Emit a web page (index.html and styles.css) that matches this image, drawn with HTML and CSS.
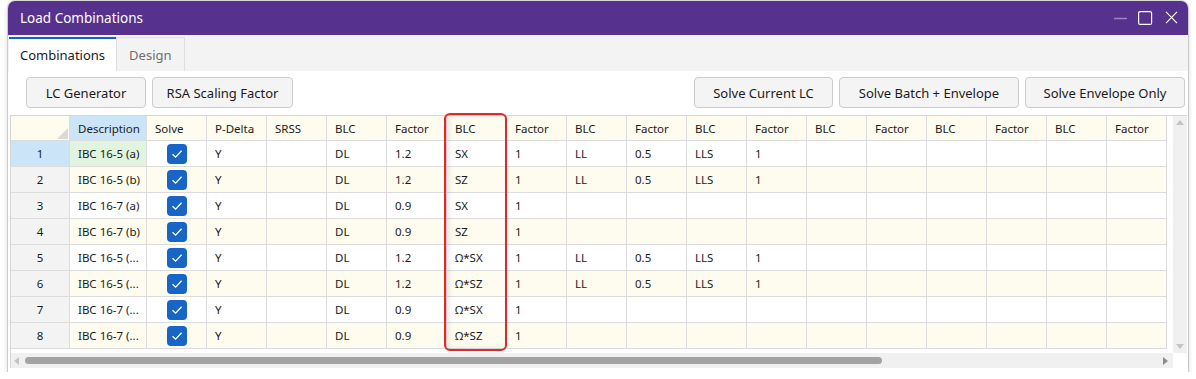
FILE: index.html
```html
<!DOCTYPE html>
<html lang="en">
<head>
  <meta charset="UTF-8" />
  <title>Load Combinations</title>
  <link rel="stylesheet" href="styles.css">
</head>
<body>

  <div class="window">
    <!-- Title bar -->
    <div class="titlebar">
      <span class="title">Load Combinations</span>
      <svg class="controls" width="64" height="14" viewBox="0 0 64 14">
        <path d="M0 7.5H13" stroke="#9c86c2" stroke-width="1.3" fill="none" />
        <rect x="24.6" y="0.6" width="13" height="12.8" rx="1.5" stroke="#fff" stroke-width="1.2" fill="none" />
        <path d="M52 0.8L63 12.2M63 0.8L52 12.2" stroke="#fff" stroke-width="1.2" fill="none" />
      </svg>
    </div>

    <!-- Tabs -->
    <div class="tabs">
      <div class="tab active">Combinations</div>
      <div class="tab">Design</div>
    </div>

    <!-- Toolbar -->
    <div class="toolbar">
      <div class="group">
        <button class="btn w-lcgen">LC Generator</button>
        <button class="btn w-rsa">RSA Scaling Factor</button>
      </div>
      <div class="group">
        <button class="btn w-current">Solve Current LC</button>
        <button class="btn w-batch">Solve Batch + Envelope</button>
        <button class="btn w-env">Solve Envelope Only</button>
      </div>
    </div>

    <!-- Grid -->
    <div class="gridbox">
      <div class="viewport">
        <div class="row head">
          <div class="cell corner-cell"><span class="tri"></span></div>
          <div class="cell selected">Description</div>
          <div class="cell">Solve</div>
          <div class="cell">P-Delta</div>
          <div class="cell">SRSS</div>
          <div class="cell">BLC</div>
          <div class="cell">Factor</div>
          <div class="cell">BLC</div>
          <div class="cell">Factor</div>
          <div class="cell">BLC</div>
          <div class="cell">Factor</div>
          <div class="cell">BLC</div>
          <div class="cell">Factor</div>
          <div class="cell">BLC</div>
          <div class="cell">Factor</div>
          <div class="cell">BLC</div>
          <div class="cell">Factor</div>
          <div class="cell">BLC</div>
          <div class="cell">Factor</div>
        </div>

        <div class="row">
          <div class="cell num selected">1</div>
          <div class="cell current">IBC 16-5 (a)</div>
          <div class="cell solve"><span class="check"><svg width="20" height="20" viewBox="0 0 20 20"><path d="M5.5 10.3L8.6 13.2L14.6 6.8" stroke="#fff" stroke-width="1.3" fill="none" /></svg></span></div>
          <div class="cell">Y</div>
          <div class="cell"></div>
          <div class="cell">DL</div>
          <div class="cell">1.2</div>
          <div class="cell">SX</div>
          <div class="cell">1</div>
          <div class="cell">LL</div>
          <div class="cell">0.5</div>
          <div class="cell">LLS</div>
          <div class="cell">1</div>
          <div class="cell"></div><div class="cell"></div><div class="cell"></div><div class="cell"></div><div class="cell"></div><div class="cell"></div>
        </div>

        <div class="row">
          <div class="cell num">2</div>
          <div class="cell">IBC 16-5 (b)</div>
          <div class="cell solve"><span class="check"><svg width="20" height="20" viewBox="0 0 20 20"><path d="M5.5 10.3L8.6 13.2L14.6 6.8" stroke="#fff" stroke-width="1.3" fill="none" /></svg></span></div>
          <div class="cell">Y</div>
          <div class="cell"></div>
          <div class="cell">DL</div>
          <div class="cell">1.2</div>
          <div class="cell">SZ</div>
          <div class="cell">1</div>
          <div class="cell">LL</div>
          <div class="cell">0.5</div>
          <div class="cell">LLS</div>
          <div class="cell">1</div>
          <div class="cell"></div><div class="cell"></div><div class="cell"></div><div class="cell"></div><div class="cell"></div><div class="cell"></div>
        </div>

        <div class="row">
          <div class="cell num">3</div>
          <div class="cell">IBC 16-7 (a)</div>
          <div class="cell solve"><span class="check"><svg width="20" height="20" viewBox="0 0 20 20"><path d="M5.5 10.3L8.6 13.2L14.6 6.8" stroke="#fff" stroke-width="1.3" fill="none" /></svg></span></div>
          <div class="cell">Y</div>
          <div class="cell"></div>
          <div class="cell">DL</div>
          <div class="cell">0.9</div>
          <div class="cell">SX</div>
          <div class="cell">1</div>
          <div class="cell"></div><div class="cell"></div><div class="cell"></div><div class="cell"></div>
          <div class="cell"></div><div class="cell"></div><div class="cell"></div><div class="cell"></div><div class="cell"></div><div class="cell"></div>
        </div>

        <div class="row">
          <div class="cell num">4</div>
          <div class="cell">IBC 16-7 (b)</div>
          <div class="cell solve"><span class="check"><svg width="20" height="20" viewBox="0 0 20 20"><path d="M5.5 10.3L8.6 13.2L14.6 6.8" stroke="#fff" stroke-width="1.3" fill="none" /></svg></span></div>
          <div class="cell">Y</div>
          <div class="cell"></div>
          <div class="cell">DL</div>
          <div class="cell">0.9</div>
          <div class="cell">SZ</div>
          <div class="cell">1</div>
          <div class="cell"></div><div class="cell"></div><div class="cell"></div><div class="cell"></div>
          <div class="cell"></div><div class="cell"></div><div class="cell"></div><div class="cell"></div><div class="cell"></div><div class="cell"></div>
        </div>

        <div class="row">
          <div class="cell num">5</div>
          <div class="cell">IBC 16-5 (...</div>
          <div class="cell solve"><span class="check"><svg width="20" height="20" viewBox="0 0 20 20"><path d="M5.5 10.3L8.6 13.2L14.6 6.8" stroke="#fff" stroke-width="1.3" fill="none" /></svg></span></div>
          <div class="cell">Y</div>
          <div class="cell"></div>
          <div class="cell">DL</div>
          <div class="cell">1.2</div>
          <div class="cell">Ω*SX</div>
          <div class="cell">1</div>
          <div class="cell">LL</div>
          <div class="cell">0.5</div>
          <div class="cell">LLS</div>
          <div class="cell">1</div>
          <div class="cell"></div><div class="cell"></div><div class="cell"></div><div class="cell"></div><div class="cell"></div><div class="cell"></div>
        </div>

        <div class="row">
          <div class="cell num">6</div>
          <div class="cell">IBC 16-5 (...</div>
          <div class="cell solve"><span class="check"><svg width="20" height="20" viewBox="0 0 20 20"><path d="M5.5 10.3L8.6 13.2L14.6 6.8" stroke="#fff" stroke-width="1.3" fill="none" /></svg></span></div>
          <div class="cell">Y</div>
          <div class="cell"></div>
          <div class="cell">DL</div>
          <div class="cell">1.2</div>
          <div class="cell">Ω*SZ</div>
          <div class="cell">1</div>
          <div class="cell">LL</div>
          <div class="cell">0.5</div>
          <div class="cell">LLS</div>
          <div class="cell">1</div>
          <div class="cell"></div><div class="cell"></div><div class="cell"></div><div class="cell"></div><div class="cell"></div><div class="cell"></div>
        </div>

        <div class="row">
          <div class="cell num">7</div>
          <div class="cell">IBC 16-7 (...</div>
          <div class="cell solve"><span class="check"><svg width="20" height="20" viewBox="0 0 20 20"><path d="M5.5 10.3L8.6 13.2L14.6 6.8" stroke="#fff" stroke-width="1.3" fill="none" /></svg></span></div>
          <div class="cell">Y</div>
          <div class="cell"></div>
          <div class="cell">DL</div>
          <div class="cell">0.9</div>
          <div class="cell">Ω*SX</div>
          <div class="cell">1</div>
          <div class="cell"></div><div class="cell"></div><div class="cell"></div><div class="cell"></div>
          <div class="cell"></div><div class="cell"></div><div class="cell"></div><div class="cell"></div><div class="cell"></div><div class="cell"></div>
        </div>

        <div class="row">
          <div class="cell num">8</div>
          <div class="cell">IBC 16-7 (...</div>
          <div class="cell solve"><span class="check"><svg width="20" height="20" viewBox="0 0 20 20"><path d="M5.5 10.3L8.6 13.2L14.6 6.8" stroke="#fff" stroke-width="1.3" fill="none" /></svg></span></div>
          <div class="cell">Y</div>
          <div class="cell"></div>
          <div class="cell">DL</div>
          <div class="cell">0.9</div>
          <div class="cell">Ω*SZ</div>
          <div class="cell">1</div>
          <div class="cell"></div><div class="cell"></div><div class="cell"></div><div class="cell"></div>
          <div class="cell"></div><div class="cell"></div><div class="cell"></div><div class="cell"></div><div class="cell"></div><div class="cell"></div>
        </div>
      </div>

      <!-- Vertical scrollbar -->
      <div class="vscroll">
        <svg width="8" height="5" viewBox="0 0 8 5"><path d="M0 5L4 0L8 5Z" fill="#c4c4c4" /></svg>
        <svg width="8" height="5" viewBox="0 0 8 5"><path d="M0 0L4 5L8 0Z" fill="#c4c4c4" /></svg>
      </div>

      <!-- Horizontal scrollbar -->
      <div class="hscroll">
        <svg width="5" height="8" viewBox="0 0 5 8"><path d="M5 0L0 4L5 8Z" fill="#c4c4c4" /></svg>
        <div class="thumb"></div>
        <svg class="right-arrow" width="5" height="8" viewBox="0 0 5 8"><path d="M0 0L5 4L0 8Z" fill="#8c8c8c" /></svg>
      </div>
      <div class="scroll-corner"></div>

      <!-- highlighted column -->
      <div class="highlight"></div>
    </div>
  </div>

</body>
</html>
```

FILE: styles.css
```css
body {
  margin: 0;
  background: #fff;
  font-family: "Noto Sans", "Open Sans", sans-serif;
  color: #1b1b1b;
}

.window {
  margin: 1px 8px 0;
  width: 1180px;
  height: 371px;
  display: flex;
  flex-direction: column;
  background: #fff;
  border-radius: 7px 7px 0 0;
  overflow: hidden;
  box-shadow: 0 0 0 1px rgba(0,0,0,0.12), 0 2px 5px rgba(0,0,0,0.22);
}

.titlebar {
  height: 34px;
  flex-shrink: 0;
  background: #56318d;
  display: flex;
  align-items: center;
  justify-content: space-between;
  padding: 0 10px 0 12px;
}

.title {
  color: #fff;
  font-size: 13.5px;
}

.tabs {
  height: 36px;
  flex-shrink: 0;
  box-sizing: border-box;
  background: #f3f3f3;
  padding: 2px 0 0 1px;
  display: flex;
  align-items: flex-end;
}

.tab {
  height: 34px;
  box-sizing: border-box;
  padding: 0 12px;
  display: flex;
  align-items: center;
  font-size: 13px;
  color: #6e6e6e;
  border: 1px solid #dedede;
  border-bottom: none;
}

.tab.active {
  background: #fff;
  color: #1b1b1b;
  border: none;
  border-top: 2px solid #0c63c4;
  padding: 0 11px;
}

.toolbar {
  height: 44px;
  flex-shrink: 0;
  box-sizing: border-box;
  padding: 6px 3px 0 18px;
  display: flex;
  justify-content: space-between;
  align-items: flex-start;
}

.group {
  display: flex;
  gap: 6px;
}

.btn {
  height: 31px;
  padding: 0;
  background: #f4f4f4;
  border: 1px solid #cccccc;
  border-radius: 4px;
  font-family: inherit;
  font-size: 13px;
  color: #1b1b1b;
}

.w-lcgen { width: 120px; }
.w-rsa { width: 141px; }
.w-current { width: 139px; }
.w-batch { width: 180px; }
.w-env { width: 160px; }

.gridbox {
  height: 253px;
  margin: 0 1px 0 2px;
  box-sizing: border-box;
  border-top: 1px solid #d6d6d6;
  border-left: 1px solid #d6d6d6;
  display: grid;
  grid-template-columns: 1fr 14px;
  grid-template-rows: 1fr 15px;
  position: relative;
}

.viewport {
  overflow: hidden;
  background: #fff;
}

.row {
  display: grid;
  grid-template-columns: 59px 77px repeat(17, 60px);
  height: 26px;
}

.row.head {
  height: 25px;
}

.cell {
  box-sizing: border-box;
  border-right: 1px solid #dcdcdc;
  border-bottom: 1px solid #dcdcdc;
  padding: 0 8px;
  display: flex;
  align-items: center;
  font-size: 11.5px;
  white-space: nowrap;
  overflow: hidden;
}

.head .cell {
  background: #f3f3f3;
}

.row:nth-child(odd) .cell {
  background: #fdfcee;
}

.row .cell.num {
  background: #f3f3f3;
  justify-content: center;
  padding: 0;
}

.row .cell.selected {
  background: #cce4f7;
}

.row .cell.current {
  background: #e0f4df;
}

.corner-cell {
  justify-content: flex-end;
  align-items: flex-end;
  padding: 0 1px 1px 0;
}

.tri {
  width: 0;
  height: 0;
  border-left: 11px solid transparent;
  border-bottom: 11px solid #d9d9d9;
}

.cell.solve {
  justify-content: center;
  padding: 0;
}

.check {
  width: 20px;
  height: 20px;
  border-radius: 4px;
  background: #1766c7;
  display: flex;
}

.vscroll {
  background: #f0f0f0;
  display: flex;
  flex-direction: column;
  justify-content: space-between;
  align-items: center;
  padding: 4px 0;
}

.hscroll {
  background: #f0f0f0;
  display: flex;
  align-items: center;
  padding: 0 0 0 3px;
}

.thumb {
  width: 857px;
  height: 7px;
  margin-left: 6px;
  border-radius: 4px;
  background: #a3a3a3;
}

.right-arrow {
  margin-left: auto;
  margin-right: 5px;
}

.scroll-corner {
  background: #fff;
}

.highlight {
  position: absolute;
  left: 433px;
  top: -3px;
  width: 63px;
  height: 238px;
  box-sizing: border-box;
  border: 2px solid #e5262b;
  border-radius: 6px;
  box-shadow: inset 3px 0 5px rgba(0,0,0,0.1);
  pointer-events: none;
}
```
